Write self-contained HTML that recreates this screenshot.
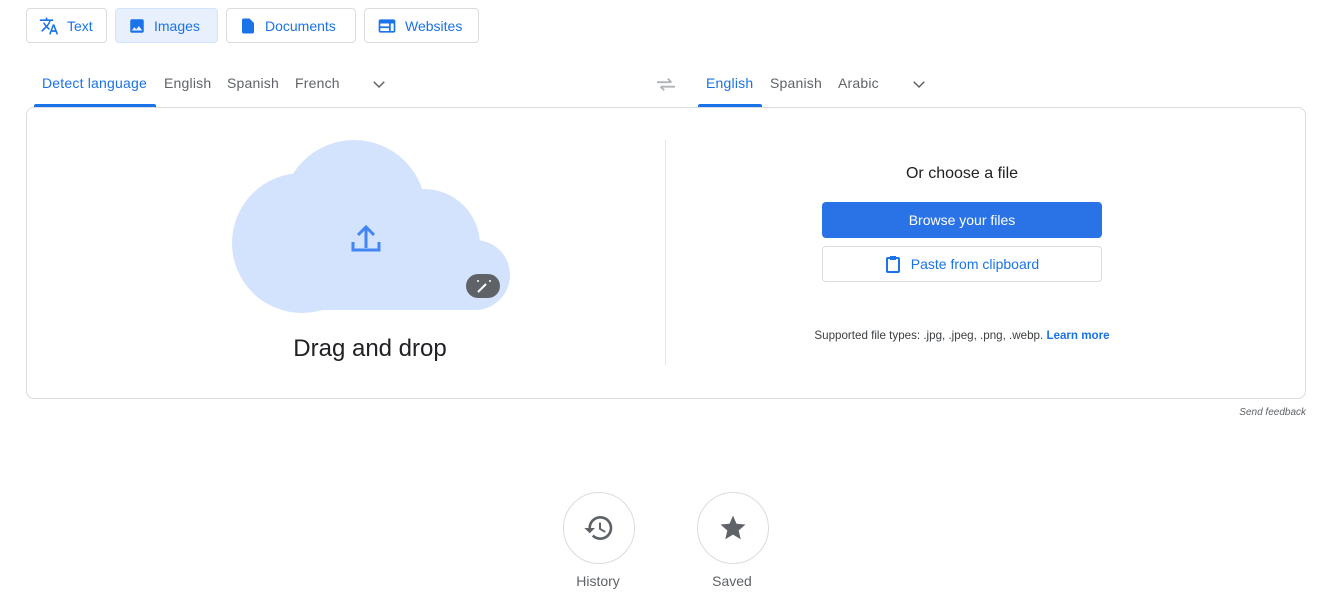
<!DOCTYPE html>
<html><head><meta charset="utf-8"><style>
*{margin:0;padding:0;box-sizing:border-box}
body{width:1333px;height:600px;background:#fff;font-family:"Liberation Sans",Arial,sans-serif;position:relative;overflow:hidden}
.a{position:absolute}
.tab{position:absolute;top:8px;height:35px;border:1px solid #dadce0;border-radius:4px;color:#1a73e8;font-size:14px;display:flex;align-items:center;padding-left:12px;gap:8px}
.lang{position:absolute;top:75px;font-size:14px;color:#5f6368;letter-spacing:.2px}
.blue{color:#1a73e8}
.circ{position:absolute;width:72px;height:72px;border:1px solid #dadce0;border-radius:50%;display:flex;align-items:center;justify-content:center}
.lab{position:absolute;top:573px;font-size:14px;color:#5f6368;width:100px;text-align:center}
</style></head><body>
<div class="tab" style="left:26px;width:81px"><svg width="20" height="20" viewBox="0 0 24 24"><path fill="#1a73e8" d="M12.87 15.07l-2.54-2.51.03-.03A17.52 17.52 0 0014.07 6H17V4h-7V2H8v2H1v2h11.17C11.5 7.92 10.44 9.75 9 11.350 8.07 10.32 7.3 9.19 6.69 8h-2c.73 1.63 1.73 3.17 2.98 4.56l-5.090 5.02L4 19l5-5 3.11 3.11.76-2.04zM18.5 10h-2L12 22h2l1.12-3h4.75L21 22h2l-4.5-12zm-2.62 7l1.62-4.33L19.12 17h-3.24z"/></svg>Text</div>
<div class="tab" style="left:115px;width:103px;background:#e8f0fe;border-color:#d2e3fc"><svg width="18" height="18" viewBox="0 0 24 24"><path fill="#1a73e8" d="M21 19V5c0-1.1-.9-2-2-2H5c-1.1 0-2 .9-2 2v14c0 1.1.9 2 2 2h14c1.1 0 2-.9 2-2zM8.5 13.5l2.5 3 3.5-4.5 4.5 6H5l3.5-4.5z"/></svg>Images</div>
<div class="tab" style="left:226px;width:130px"><svg width="18" height="18" viewBox="0 0 24 24"><path fill="#1a73e8" d="M14 2H6c-1.1 0-2 .9-2 2v16c0 1.1.9 2 2 2h12c1.1 0 2-.9 2-2V8l-6-6z"/></svg>Documents</div>
<div class="tab" style="left:364px;width:115px"><svg width="20" height="20" viewBox="0 0 24 24"><path fill="#1a73e8" d="M20 4H4c-1.1 0-2 .9-2 2v12c0 1.1.9 2 2 2h16c1.1 0 2-.9 2-2V6c0-1.1-.9-2-2-2zM4 9h10.5v3.5H4V9zm0 5.5h10.5V18H4v-3.5zM20 18h-3.5V9H20v9z"/></svg>Websites</div>

<div class="lang blue" style="left:42px">Detect language</div>
<div class="a" style="left:34px;top:104px;width:122px;height:3px;background:#1a73e8;border-radius:2px 2px 0 0"></div>
<div class="lang" style="left:164px">English</div>
<div class="lang" style="left:227px">Spanish</div>
<div class="lang" style="left:295px">French</div>
<svg class="a" style="left:370px;top:75px" width="18" height="18" viewBox="0 0 24 24"><path d="M5 9l7 7 7-7" fill="none" stroke="#5f6368" stroke-width="2"/></svg>
<svg class="a" style="left:655px;top:75px" width="22" height="18" viewBox="0 0 24 20"><path d="M2 8h16M14 4l4 4M22 13H6M10 17l-4-4" fill="none" stroke="#b0b3b8" stroke-width="2"/></svg>
<div class="lang blue" style="left:706px">English</div>
<div class="a" style="left:698px;top:104px;width:64px;height:3px;background:#1a73e8;border-radius:2px 2px 0 0"></div>
<div class="lang" style="left:770px">Spanish</div>
<div class="lang" style="left:838px">Arabic</div>
<svg class="a" style="left:910px;top:75px" width="18" height="18" viewBox="0 0 24 24"><path d="M5 9l7 7 7-7" fill="none" stroke="#5f6368" stroke-width="2"/></svg>

<div class="a" style="left:26px;top:107px;width:1280px;height:292px;border:1px solid #dadce0;border-radius:8px"></div>
<div class="a" style="left:665px;top:140px;width:1px;height:225px;background:#e3e6ea"></div>

<svg class="a" style="left:0;top:0" width="600" height="400">
<g fill="#d3e3fd"><circle cx="302" cy="243" r="70"/><circle cx="354" cy="212" r="72"/><circle cx="424" cy="245" r="56"/><circle cx="475" cy="275" r="35"/><rect x="300" y="240" width="175" height="70"/></g>
<path d="M366 248v-20M358 235l8-8 8 8M353 242v8h26v-8" fill="none" stroke="#4285f4" stroke-width="3"/>
<rect x="466" y="274" width="34" height="24" rx="12" fill="#5f6368"/>
<path d="M478 292l8-8" stroke="#fff" stroke-width="2"/><circle cx="478" cy="281" r="1" fill="#fff"/><circle cx="490" cy="281" r="1" fill="#fff"/>
</svg>
<div class="a" style="left:240px;top:335px;width:260px;text-align:center;font-size:24px;color:#202124">Drag and drop</div>

<div class="a" style="left:822px;top:165px;width:280px;text-align:center;font-size:16px;color:#202124">Or choose a file</div>
<div class="a" style="left:822px;top:202px;width:280px;height:36px;background:#2a73e6;border-radius:4px;color:#fff;font-size:14px;display:flex;align-items:center;justify-content:center">Browse your files</div>
<div class="a" style="left:822px;top:246px;width:280px;height:36px;border:1px solid #dadce0;border-radius:4px;color:#1a73e8;font-size:14px;display:flex;align-items:center;justify-content:center;gap:10px"><svg width="16" height="18" viewBox="0 0 16 18"><rect x="2" y="3" width="12" height="14" rx="1" fill="none" stroke="#1a73e8" stroke-width="2"/><rect x="5" y="1" width="6" height="4" fill="#1a73e8"/></svg>Paste from clipboard</div>
<div class="a" style="left:700px;top:329px;width:524px;text-align:center;font-size:11.6px;color:#3c4043">Supported file types: .jpg, .jpeg, .png, .webp. <span style="color:#1a73e8;font-weight:bold">Learn more</span></div>
<div class="a" style="left:1206px;top:407px;width:100px;text-align:right;font-size:10px;font-style:italic;color:#5f6368">Send feedback</div>

<div class="circ" style="left:563px;top:492px"><svg width="32" height="32" viewBox="0 0 24 24"><path fill="#5f6368" d="M13 3a9 9 0 00-9 9H1l3.89 3.89.07.14L9 12H6c0-3.87 3.130-7 7-7s7 3.13 7 7-3.13 7-7 7c-1.93 0-3.68-.79-4.94-2.06l-1.42 1.42A8.950 8.95 0 0013 21a9 9 0 000-18zm-1 5v5l4.28 2.54.72-1.21-3.5-2.08V8H12z"/></svg></div>
<div class="lab" style="left:548px">History</div>
<div class="circ" style="left:697px;top:492px"><svg width="30" height="30" viewBox="0 0 24 24"><path fill="#5f6368" d="M12 17.27L18.18 21l-1.64-7.03L22 9.24l-7.19-.61L12 2 9.19 8.63 2 9.24l5.46 4.73L5.82 21z"/></svg></div>
<div class="lab" style="left:682px">Saved</div>
</body></html>
